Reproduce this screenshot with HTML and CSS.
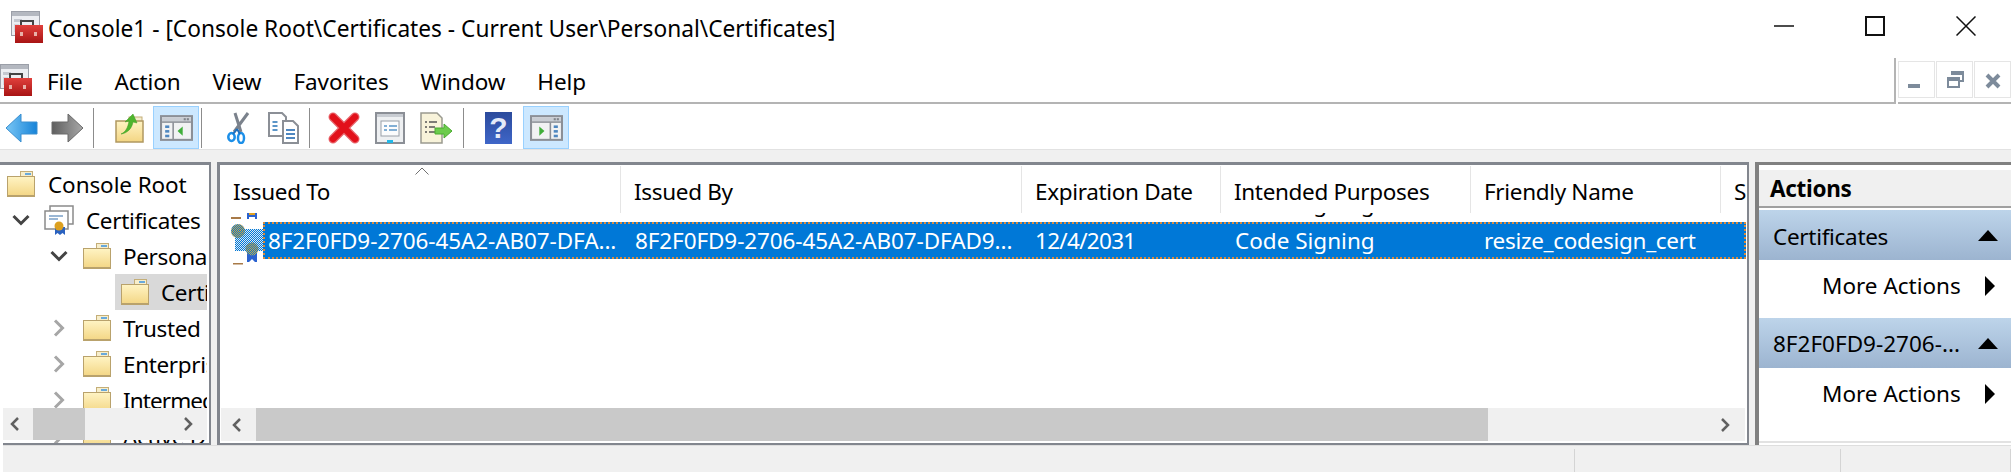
FILE: index.html
```html
<!DOCTYPE html>
<html lang="en">
<head>
<meta charset="utf-8">
<title>Console1</title>
<link rel="stylesheet" href="styles.css">
</head>
<body>
<svg class="defs" width="0" height="0" aria-hidden="true">
  <defs>
    <linearGradient id="fold" x1="0" y1="0" x2="0" y2="1"><stop offset="0" stop-color="#fff4c4"/><stop offset="1" stop-color="#f3d583"/></linearGradient>
    <linearGradient id="redbox" x1="0" y1="0" x2="0" y2="1"><stop offset="0" stop-color="#e0403c"/><stop offset="1" stop-color="#a81414"/></linearGradient>
    <linearGradient id="bluearrow" x1="0" y1="0" x2="1" y2="0"><stop offset="0" stop-color="#79c6f5"/><stop offset="1" stop-color="#1683d8"/></linearGradient>
    <linearGradient id="grayarrow" x1="0" y1="0" x2="1" y2="0"><stop offset="0" stop-color="#5f5f5f"/><stop offset="1" stop-color="#a8a8a8"/></linearGradient>
    <linearGradient id="helpbg" x1="0" y1="0" x2="0" y2="1"><stop offset="0" stop-color="#2b4a9c"/><stop offset="1" stop-color="#3f66c8"/></linearGradient>
    <pattern id="check" width="2" height="2" patternUnits="userSpaceOnUse"><rect width="2" height="2" fill="#0078d7"/><rect width="1" height="1" fill="#dbe9f4"/><rect x="1" y="1" width="1" height="1" fill="#dbe9f4"/></pattern>
    <pattern id="checkgold" width="2" height="2" patternUnits="userSpaceOnUse"><rect width="2" height="2" fill="#0078d7"/><rect width="1" height="1" fill="#d8a53c"/><rect x="1" y="1" width="1" height="1" fill="#d8a53c"/></pattern>
    <symbol id="folder" viewBox="0 0 28 26">
      <rect x="13.5" y="0.5" width="12" height="7" fill="#f7eecb" stroke="#c4ae78"/>
      <rect x="18" y="2" width="6" height="2" fill="#68a9dc"/>
      <rect x="0.5" y="5.5" width="27" height="20" fill="url(#fold)" stroke="#b9a26c"/>
      <rect x="1" y="24" width="26" height="1.5" fill="#b9a26c"/>
    </symbol>
    <symbol id="toolbox" viewBox="0 0 32 32">
      <rect x="0.5" y="0.5" width="28" height="24" fill="#eceef2" stroke="#9b9fa8"/>
      <rect x="1" y="1" width="27" height="4" fill="#b4b8c0"/>
      <rect x="3" y="8" width="8" height="3" fill="#c4c8d0"/>
      <rect x="3" y="13" width="5" height="8" fill="#d4d8e0"/>
      <path d="M10 14v-4h12v4" fill="none" stroke="#444" stroke-width="2"/>
      <rect x="4" y="14" width="28" height="18" fill="url(#redbox)"/>
      <rect x="9" y="21" width="3" height="4" fill="#e8b0a8"/>
      <rect x="23" y="21" width="3" height="4" fill="#e8b0a8"/>
    </symbol>
    <symbol id="panes" viewBox="0 0 32 25">
      <rect x="1" y="1" width="30" height="23" fill="#f1f2f3" stroke="#8b8f96" stroke-width="2"/>
      <rect x="2" y="2" width="28" height="4" fill="#c8ccd2"/>
      <rect x="23" y="3" width="2" height="2" fill="#7f8389"/><rect x="26" y="3" width="2" height="2" fill="#7f8389"/>
      <rect x="2" y="6" width="28" height="1.5" fill="#8b8f96"/>
    </symbol>
  </defs>
</svg>

<header class="titlebar">
  <svg class="app-icon"><use href="#toolbox"/></svg>
  <span class="title-text">Console1 - [Console Root\Certificates - Current User\Personal\Certificates]</span>
  <div class="win-controls">
    <span class="win-btn"><svg width="20" height="20" viewBox="0 0 20 20"><path d="M0 10h20" stroke="#111" stroke-width="1.5"/></svg></span>
    <span class="win-btn"><svg width="20" height="20" viewBox="0 0 20 20"><rect x="1" y="1" width="18" height="18" fill="none" stroke="#111" stroke-width="2"/></svg></span>
    <span class="win-btn"><svg width="20" height="20" viewBox="0 0 20 20"><path d="M0.5 0.5l19 19M19.5 0.5l-19 19" stroke="#111" stroke-width="1.5"/></svg></span>
  </div>
</header>

<nav class="menubar">
  <div class="menu-main">
    <svg class="menu-icon"><use href="#toolbox"/></svg>
    <span class="menu-item">File</span>
    <span class="menu-item">Action</span>
    <span class="menu-item">View</span>
    <span class="menu-item">Favorites</span>
    <span class="menu-item">Window</span>
    <span class="menu-item">Help</span>
  </div>
  <div class="mdi">
    <span class="mdi-btn"><svg width="36" height="36" viewBox="0 0 36 36"><rect x="9" y="22" width="12" height="4" fill="#7d8b9b"/></svg></span>
    <span class="mdi-btn"><svg width="36" height="36" viewBox="0 0 36 36"><path d="M15 13v-3h11v9h-4" fill="none" stroke="#7d8b9b" stroke-width="2"/><path d="M15 11.5h11" stroke="#7d8b9b" stroke-width="3"/><rect x="11" y="16" width="11" height="9" fill="#fff" stroke="#7d8b9b" stroke-width="2"/><path d="M11 17.5h11" stroke="#7d8b9b" stroke-width="3"/></svg></span>
    <span class="mdi-btn"><svg width="36" height="36" viewBox="0 0 36 36"><path d="M12 13l12 12M24 13l-12 12" stroke="#7d8b9b" stroke-width="4"/></svg></span>
  </div>
</nav>

<div class="toolbar">
  <span class="tb tb-first"><svg width="33" height="30" viewBox="0 0 33 30"><path d="M1 15L16 1v8h16v12H16v8z" fill="url(#bluearrow)" stroke="#3a8fd0"/></svg></span>
  <span class="tb"><svg width="33" height="30" viewBox="0 0 33 30"><path d="M32 15L17 1v8H1v12h16v8z" fill="url(#grayarrow)" stroke="#6a6a6a"/></svg></span>
  <i class="sep sep-a"></i>
  <span class="tb"><svg width="29" height="30" viewBox="0 0 29 30"><rect x="14" y="4" width="13" height="6" fill="#f4eccb" stroke="#c4ae78"/><rect x="1" y="8" width="27" height="21" fill="url(#fold)" stroke="#b09860" stroke-width="1.5"/><path d="M6 21c5-2 7-7 8-13l-4 1 8-8 4 9-4-1c-1 6-5 11-12 12z" fill="#4fb52e" stroke="#3c9a20" stroke-width=".5"/></svg></span>
  <span class="tb tb-on"><svg width="33" height="26" viewBox="0 0 32 25"><use href="#panes"/><rect x="12" y="7" width="1.5" height="17" fill="#8b8f96"/><rect x="5" y="10" width="4" height="2.5" fill="#4f87c0"/><rect x="5" y="14.5" width="4" height="2.5" fill="#4f87c0"/><rect x="5" y="19" width="4" height="2.5" fill="#4f87c0"/><path d="M22 11v9l-5-4.500z" fill="#3fae3a"/></svg></span>
  <i class="sep sep-b"></i>
  <span class="tb"><svg width="23" height="32" viewBox="0 0 23 32"><path d="M8 1l6 19M21 1L7 20" stroke="#7b828c" stroke-width="3" fill="none"/><ellipse cx="4.500" cy="25" rx="3.200" ry="4" fill="none" stroke="#1c8fe8" stroke-width="2.500"/><ellipse cx="14" cy="26" rx="3" ry="5" fill="none" stroke="#1c8fe8" stroke-width="2.500"/><path d="M10 17l-4 5M10 17l3 5" stroke="#1c70c0" stroke-width="2"/></svg></span>
  <span class="tb"><svg width="32" height="32" viewBox="0 0 32 32"><path d="M1 1h13l4 4v19H1z" fill="#fff" stroke="#8b8f96" stroke-width="2"/><path d="M4.500 10h5M4.500 14h5M4.500 18h5" stroke="#5b95c8" stroke-width="2"/><path d="M15 9h10l5 5v17H15z" fill="#fff" stroke="#8b8f96" stroke-width="2"/><path d="M18 18h9M18 22h9M18 26h9" stroke="#4f87c0" stroke-width="2"/></svg></span>
  <i class="sep sep-c"></i>
  <span class="tb"><svg width="32" height="32" viewBox="0 0 32 32"><path d="M5 5l22 22M27 5L5 27" stroke="#e8636a" stroke-width="9" stroke-linecap="round"/><path d="M5 5l22 22M27 5L5 27" stroke="#e2101a" stroke-width="6.500" stroke-linecap="round"/></svg></span>
  <span class="tb"><svg width="30" height="32" viewBox="0 0 30 32"><rect x="1" y="1" width="28" height="30" fill="#eef0f2" stroke="#8b8f96" stroke-width="2"/><rect x="2" y="2" width="26" height="3" fill="#c8ccd2"/><rect x="6" y="9" width="18" height="15" fill="#fbfcfd" stroke="#9aa0a8"/><path d="M9 14h3M9 18h3M14 14h8M14 18h8" stroke="#5b95c8" stroke-width="1.500"/><rect x="12" y="28" width="6" height="3" fill="#22b8e8"/></svg></span>
  <span class="tb"><svg width="33" height="32" viewBox="0 0 33 32"><path d="M1 1h16l5 5v25H1z" fill="#f8f3da" stroke="#9a9a90" stroke-width="1.500"/><path d="M5 10h2M5 15h2M5 20h2M9 10h8M9 15h6M9 20h6" stroke="#555" stroke-width="1.500"/><path d="M32 19l-8-7v4H15v6h9v4z" fill="#6ccc4c" stroke="#4aaa30"/></svg></span>
  <i class="sep sep-d"></i>
  <span class="tb"><svg width="27" height="32" viewBox="0 0 27 32"><rect width="27" height="32" fill="url(#helpbg)"/><text x="13.500" y="26" text-anchor="middle" class="help-q">?</text></svg></span>
  <span class="tb tb-on tb-last"><svg width="33" height="26" viewBox="0 0 32 25"><use href="#panes"/><rect x="19" y="7" width="1.500" height="17" fill="#8b8f96"/><rect x="23" y="10" width="4" height="2.500" fill="#4f87c0"/><rect x="23" y="14.500" width="4" height="2.500" fill="#4f87c0"/><rect x="23" y="19" width="4" height="2.500" fill="#4f87c0"/><path d="M9 11v9l5-4.500z" fill="#3fae3a"/></svg></span>
</div>

<div class="strip"></div>

<main class="workspace">
  <section class="tree">
    <div class="tree-clip">
      <div class="node"><svg class="ico-f l0-ico"><use href="#folder"/></svg><span class="lbl lbl-root">Console Root</span></div>
      <div class="node l1"><svg class="tw" viewBox="0 0 18 18"><path d="M1.500 5l7.500 7.500 7.500-7.500" fill="none" stroke="#444" stroke-width="3"/></svg><svg class="ico-c" viewBox="0 0 30 30"><rect x="6" y="1" width="23" height="18" fill="#fff" stroke="#8a8a8a" stroke-width="1.500"/><rect x="1" y="6" width="23" height="18" fill="#fff" stroke="#8a8a8a" stroke-width="1.500"/><path d="M5 11h14M5 14h9" stroke="#7aa0c8" stroke-width="1.500"/><path d="M11 22h10v8l-2.500-2-2.500 2-2.500-2-2.500 2z" fill="#2a62c0"/><circle cx="15" cy="21" r="4.500" fill="#dca020"/></svg><span class="lbl">Certificates</span></div>
      <div class="node l2"><svg class="tw" viewBox="0 0 18 18"><path d="M1.500 5l7.500 7.500 7.500-7.500" fill="none" stroke="#444" stroke-width="3"/></svg><svg class="ico-f"><use href="#folder"/></svg><span class="lbl">Personal</span></div>
      <div class="node l3"><div class="tree-sel"><svg class="ico-f"><use href="#folder"/></svg><span class="lbl">Certificates</span></div></div>
      <div class="node l2"><svg class="tw" viewBox="0 0 18 18"><path d="M5 1.500l7.500 7.500-7.500 7.500" fill="none" stroke="#a6a6a6" stroke-width="3"/></svg><svg class="ico-f"><use href="#folder"/></svg><span class="lbl">Trusted Root</span></div>
      <div class="node l2"><svg class="tw" viewBox="0 0 18 18"><path d="M5 1.500l7.500 7.500-7.500 7.500" fill="none" stroke="#a6a6a6" stroke-width="3"/></svg><svg class="ico-f"><use href="#folder"/></svg><span class="lbl">Enterprise</span></div>
      <div class="node l2"><svg class="tw" viewBox="0 0 18 18"><path d="M5 1.500l7.500 7.500-7.500 7.500" fill="none" stroke="#a6a6a6" stroke-width="3"/></svg><svg class="ico-f"><use href="#folder"/></svg><span class="lbl lbl-tight">Intermediate</span></div>
      <div class="node l2"><svg class="tw" viewBox="0 0 18 18"><path d="M5 1.500l7.500 7.500-7.500 7.500" fill="none" stroke="#a6a6a6" stroke-width="3"/></svg><svg class="ico-f"><use href="#folder"/></svg><span class="lbl">Active Dir</span></div>
    </div>
    <div class="sb sb-tree">
      <svg class="sb-arrow" viewBox="0 0 10 14"><path d="M8 1L2 7l6 6" fill="none" stroke="#606060" stroke-width="2.500"/></svg>
      <span class="thumb thumb-tree"></span>
      <span class="sb-rest"></span>
      <svg class="sb-arrow" viewBox="0 0 10 14"><path d="M2 1l6 6-6 6" fill="none" stroke="#606060" stroke-width="2.500"/></svg>
    </div>
  </section>

  <section class="list">
    <div class="list-head">
      <svg class="sort" viewBox="0 0 14 8"><path d="M0.500 7.500L7 1l6.500 6.500" fill="none" stroke="#707070"/></svg>
      <div class="hc hc-1">Issued To</div>
      <div class="hc hc-2">Issued By</div>
      <div class="hc hc-3">Expiration Date</div>
      <div class="hc hc-4">Intended Purposes</div>
      <div class="hc hc-5">Friendly Name</div>
      <div class="hc hc-6">S</div>
    </div>
    <div class="list-body">
      <svg class="row-icon" width="34" height="54" viewBox="0 0 34 54">
        <rect x="1" y="5" width="10" height="2" fill="#a87a48"/>
        <path d="M17 1h10v6h-2v-2h-6v2h-2z" fill="#2a62d0"/><rect x="19" y="1" width="6" height="2" fill="#e0a020"/>
        <rect x="5" y="17" width="28" height="22" fill="url(#check)"/>
        <circle cx="8" cy="19" r="7" fill="url(#checkgold)"/>
        <path d="M17 40h10v10h-2l-3-3-3 3h-2z" fill="#2a62d0"/>
        <circle cx="22" cy="37" r="6.500" fill="url(#checkgold)"/>
        <rect x="3" y="51" width="10" height="1.500" fill="#a87a48"/>
      </svg>
      <div class="ghost">
        <span class="gc gc-3">12/4/2031</span>
        <span class="gc gc-4">Code Signing</span>
      </div>
      <div class="row-sel">
        <span class="cell c1">8F2F0FD9-2706-45A2-AB07-DFA...</span>
        <span class="cell c2">8F2F0FD9-2706-45A2-AB07-DFAD9...</span>
        <span class="cell c3">12/4/2031</span>
        <span class="cell c4">Code Signing</span>
        <span class="cell c5">resize_codesign_cert</span>
      </div>
    </div>
    <div class="sb sb-list">
      <svg class="sb-arrow" viewBox="0 0 10 14"><path d="M8 1L2 7l6 6" fill="none" stroke="#606060" stroke-width="2.500"/></svg>
      <span class="thumb thumb-list"></span>
      <span class="sb-rest"></span>
      <svg class="sb-arrow" viewBox="0 0 10 14"><path d="M2 1l6 6-6 6" fill="none" stroke="#606060" stroke-width="2.500"/></svg>
    </div>
  </section>

  <aside class="actions">
    <div class="act-title">Actions</div>
    <div class="act-head act-h1"><span class="act-name">Certificates</span><svg width="20" height="11" viewBox="0 0 20 11"><path d="M10 0l10 11H0z" fill="#000"/></svg></div>
    <div class="act-item"><span>More Actions</span><svg width="10" height="20" viewBox="0 0 10 20"><path d="M0 0l10 10L0 20z" fill="#000"/></svg></div>
    <div class="act-head"><span>8F2F0FD9-2706-...</span><svg width="20" height="11" viewBox="0 0 20 11"><path d="M10 0l10 11H0z" fill="#000"/></svg></div>
    <div class="act-item"><span>More Actions</span><svg width="10" height="20" viewBox="0 0 10 20"><path d="M0 0l10 10L0 20z" fill="#000"/></svg></div>
    <div class="act-end"></div>
  </aside>
</main>

<footer class="status">
  <span class="st st-0"></span>
  <span class="st st-1"></span>
  <span class="st st-2"></span>
  <span class="st st-3"></span>
</footer>
</body>
</html>
```
FILE: styles.css
```css
* { box-sizing: border-box; }
html, body { margin: 0; padding: 0; }
body {
  width: 2011px;
  height: 472px;
  overflow: hidden;
  background: #fff;
  color: #000;
  font-family: "Noto Sans", "Open Sans", sans-serif;
  font-size: 22.5px;
  display: flex;
  flex-direction: column;
}
.defs { position: absolute; }
svg { display: block; flex: none; }

.titlebar { height: 58px; display: flex; align-items: flex-start; }
.app-icon { width: 32px; height: 32px; margin: 11px 0 0 11px; }
.title-text { margin: 12px 0 0 5px; line-height: 34px; white-space: nowrap; font-size: 22.7px; }
.win-controls { margin-left: auto; display: flex; }
.win-btn { width: 91px; height: 52px; display: flex; align-items: center; justify-content: center; }

.menubar { height: 46px; display: flex; }
.menu-main { width: 1899px; display: flex; align-items: flex-start; gap: 32px; border-right: 2px solid #b4b4b4; border-bottom: 2px solid #b4b4b4; position: relative; padding-left: 47px; }
.menu-icon { width: 32px; height: 32px; position: absolute; left: 0; top: 6px; }
.menu-item { line-height: 34px; margin-top: 7px; letter-spacing: -0.1px; }
.mdi { margin-left: 2px; flex: 1; display: flex; gap: 1px; padding-top: 3px; border-bottom: 2px solid #b4b4b4; align-items: flex-start; }
.mdi-btn { width: 37px; height: 37px; border: 1px solid #e5e5e5; }

.toolbar { height: 46px; display: flex; align-items: center; border-bottom: 1px solid #e2e2e2; padding-top: 2px; }
.tb { width: 46px; height: 43px; display: flex; align-items: center; justify-content: center; }
.tb-first { margin-left: -2px; }
.tb-on { background: #cce8ff; border: 1px solid #99d1ff; margin-left: 1px; }
.tb-last { margin-left: 2px; }
.sep { width: 1px; height: 40px; background: #8c8c8c; }
.sep-a { margin: 0 12px 0 3px; }
.sep-b { margin: 0 13px 0 2px; }
.sep-c { margin: 0 11px 0 2px; }
.sep-d { margin: 0 11px 0 4px; }
.help-q { fill: #e4eaf8; font-family: "Liberation Sans", sans-serif; font-weight: 700; font-size: 30px; }

.strip { height: 12px; background: #f0f0f0; }

.workspace { height: 283px; display: flex; background: #f0f0f0; }

.tree { width: 211px; position: relative; background: #fff; border-top: 3px solid #82868e; border-right: 2px solid #82868e; }
.tree::after { content: ""; position: absolute; left: 3px; right: 0; bottom: 0; height: 2px; background: #82868e; }
.tree-clip { width: 207px; height: 278px; overflow: hidden; padding-top: 1px; }
.node { height: 36px; display: flex; align-items: center; white-space: nowrap; overflow: hidden; }
.ico-f { width: 28px; height: 26px; }
.ico-c { width: 30px; height: 30px; margin-left: 14px; }
.tw { width: 18px; height: 18px; }
.lbl { margin-left: 12px; line-height: 36px; padding-top: 2px; letter-spacing: -0.35px; }
.lbl-root { margin-left: 13px; letter-spacing: -0.1px; }
.lbl-tight { letter-spacing: -0.9px; }
.l0-ico { margin-left: 7px; }
.l1 { padding-left: 12px; }
.l2 { padding-left: 50px; }
.l2 .ico-f { margin-left: 15px; }
.l3 { padding-left: 115px; }
.tree-sel { flex: 1; height: 36px; background: #d9d9d9; display: flex; align-items: center; padding-left: 6px; overflow: hidden; }

.sb { display: flex; align-items: stretch; background: #f0f0f0; height: 33px; }
.sb-arrow { width: 10px; height: 14px; align-self: center; }
.sb-tree { position: absolute; left: 3px; top: 243px; width: 204px; height: 32px; padding: 0 14px 0 7px; }
.sb-tree .thumb-tree { width: 52px; margin-left: 13px; background: #c9c9c9; }
.sb-rest { flex: 1; }

.list { width: 1532px; margin-left: 6px; display: flex; flex-direction: column; border-top: 3px solid #82868e; border-left: 3px solid #82868e; border-right: 2px solid #82868e; border-bottom: 2px solid #82868e; background: #fff; }
.list-head { height: 48px; display: flex; position: relative; background: #fff; z-index: 1; }
.sort { position: absolute; left: 195px; top: 2px; width: 14px; height: 8px; }
.hc { padding: 8px 0 0 13px; line-height: 36px; border-right: 1px solid #e5e5e5; white-space: nowrap; overflow: hidden; margin-top: 1px; letter-spacing: -0.33px; }
.hc-1 { width: 401px; }
.hc-2 { width: 401px; }
.hc-3 { width: 199px; }
.hc-4 { width: 250px; }
.hc-5 { width: 250px; }
.hc-6 { flex: 1; border-right: 0; }
.list-body { flex: 1; position: relative; overflow: hidden; }
.row-icon { position: absolute; left: 10px; top: -1px; z-index: 1; }
.ghost { height: 9px; position: relative; overflow: hidden; display: flex; }
.gc { display: block; line-height: 37px; margin-top: -28px; white-space: nowrap; }
.gc-3 { margin-left: 816px; width: 199px; letter-spacing: -0.7px; }
.gc-4 { width: 250px; }
.row-sel { margin-left: 43px; height: 37px; margin-right: 1px; background: #0078d7; color: #fff; border: 2px dotted #d98a3c; display: flex; align-items: center; white-space: nowrap; }
.cell { display: block; line-height: 33px; overflow: hidden; }
.c1 { width: 355px; padding-left: 3px; letter-spacing: -0.1px; }
.c2 { width: 401px; padding-left: 15px; letter-spacing: -0.1px; }
.c3 { width: 199px; padding-left: 14px; letter-spacing: -0.7px; }
.c4 { width: 250px; padding-left: 15px; }
.c5 { width: 250px; padding-left: 14px; letter-spacing: -0.3px; }
.sb-list { margin: 0 2px 2px 1px; padding: 0 15px 0 11px; }
.sb-list .thumb-list { width: 1232px; margin-left: 14px; background: #c9c9c9; }

.actions { flex: 1; margin-left: 6px; border-top: 3px solid #808080; border-left: 4px solid #808080; background: #fff; padding-top: 5px; }
.act-title { height: 38px; background: #f0f0f0; border-bottom: 2px solid #a0a0a0; font-weight: 700; line-height: 38px; padding-left: 11px; letter-spacing: -0.3px; }
.act-head { margin-top: 2px; height: 50px; background: linear-gradient(#bdd4ea, #9cb4d0); display: flex; align-items: center; justify-content: space-between; padding: 0 13px 0 14px; }
.act-head:not(.act-h1) { margin-top: 0; }
.act-name { letter-spacing: -0.3px; padding-top: 2px; }
.act-item { height: 58px; padding: 0 16px 7px 63px; display: flex; align-items: center; justify-content: space-between; }
.act-end { height: 2px; margin-top: 15px; background: #e2e2e2; }

.status { margin-left: 3px; height: 27px; background: #f0f0f0; border-top: 1px solid #dedede; display: flex; align-items: flex-end; }
.st { display: block; height: 23px; }
.st-0 { width: 1572px; border-right: 1px solid #d4d4d4; }
.st-1 { width: 266px; border-right: 1px solid #d4d4d4; }
.st-2 { width: 170px; border-right: 1px solid #d4d4d4; }
.st-3 { flex: 1; }
```
